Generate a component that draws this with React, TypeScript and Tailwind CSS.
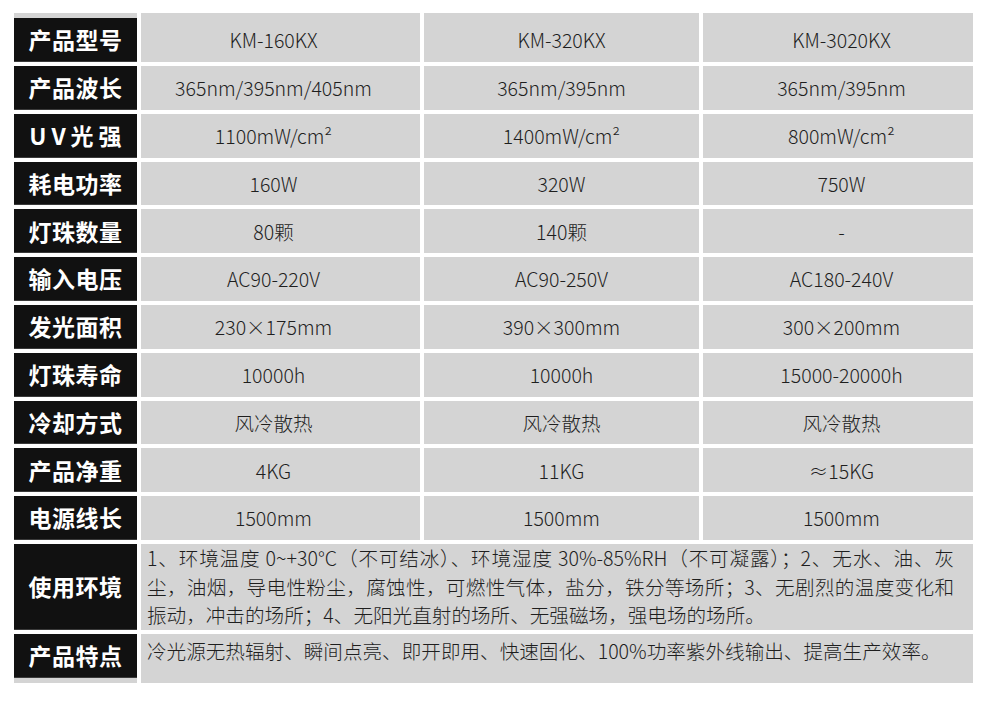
import { ReactNode } from "react";

const font = { fontFamily: '"Noto Sans CJK SC", "Noto Sans", sans-serif' };

type Row = { label: string; values: string[]; wide?: boolean };

const rows: Row[] = [
  { label: "产品波长", values: ["365nm/395nm/405nm", "365nm/395nm", "365nm/395nm"] },
  { label: "UV光强", wide: true, values: ["1100mW/cm²", "1400mW/cm²", "800mW/cm²"] },
  { label: "耗电功率", values: ["160W", "320W", "750W"] },
  { label: "灯珠数量", values: ["80颗", "140颗", "-"] },
  { label: "输入电压", values: ["AC90-220V", "AC90-250V", "AC180-240V"] },
  { label: "发光面积", values: ["230×175mm", "390×300mm", "300×200mm"] },
  { label: "灯珠寿命", values: ["10000h", "10000h", "15000-20000h"] },
  { label: "冷却方式", values: ["风冷散热", "风冷散热", "风冷散热"] },
  { label: "产品净重", values: ["4KG", "11KG", "≈15KG"] },
  { label: "电源线长", values: ["1500mm", "1500mm", "1500mm"] },
];

function Label({ children, wide }: { children: ReactNode; wide?: boolean }) {
  return (
    <div
      className={`flex h-full w-[123px] shrink-0 items-center justify-center border-b border-[#3a3a3a] bg-[#111111] text-[23px] font-bold text-white ${
        wide ? "tracking-[5px] pl-[5px]" : "tracking-[0.5px]"
      }`}
    >
      {children}
    </div>
  );
}

function Cells({ values }: { values: string[] }) {
  return (
    <>
      <div className="flex w-[279px] items-center justify-center bg-[#d4d4d4] pr-[14px]">{values[0]}</div>
      <div className="flex w-[275px] items-center justify-center bg-[#d4d4d4]">{values[1]}</div>
      <div className="flex w-[270px] items-center justify-center bg-[#d4d4d4] pl-[7px]">{values[2]}</div>
    </>
  );
}

export default function App() {
  return (
    <div className="h-[701px] w-[990px] bg-white pt-[13px] pl-[14px] text-[19.5px] font-light text-[#1e1e1e]" style={font}>
      <div className="flex flex-col gap-[4.5px]">
        {/* model row: gray strip above the black label */}
        <div className="flex h-[48.5px] gap-[4px]">
          <div className="flex w-[123px] flex-col bg-[#d4d4d4]">
            <div className="h-[5px]" />
            <div className="flex-1">
              <Label>产品型号</Label>
            </div>
          </div>
          <div className="flex gap-[4px] pt-[5px] [&>div]:-mt-[5px] [&>div]:pt-[5px]">
            <Cells values={["KM-160KX", "KM-320KX", "KM-3020KX"]} />
          </div>
        </div>

        <div className="flex flex-col gap-[4px]">
          {rows.map((r) => (
            <div key={r.label} className="flex h-[43.8px] gap-[4px]">
              <Label wide={r.wide}>{r.label}</Label>
              <Cells values={r.values} />
            </div>
          ))}

          <div className="flex h-[86px] gap-[4px]">
            <Label>使用环境</Label>
            <div className="flex w-[832px] flex-col justify-center bg-[#d4d4d4] pl-[6px] pr-[19px] text-[19.6px] leading-[28.7px]">
              <div className="text-justify [text-align-last:justify]">
                1、环境温度 0~+30°C（不可结冰）、环境湿度 30%-85%RH（不可凝露）；2、无水、油、灰
              </div>
              <div className="text-justify [text-align-last:justify]">
                尘，油烟，导电性粉尘，腐蚀性，可燃性气体，盐分，铁分等场所；3、无剧烈的温度变化和
              </div>
              <div>振动，冲击的场所；4、无阳光直射的场所、无强磁场，强电场的场所。</div>
            </div>
          </div>

          <div className="flex h-[48.7px] gap-[4px]">
            <div className="flex w-[123px] flex-col bg-[#d4d4d4]">
              <div className="h-[43.7px]">
                <Label>产品特点</Label>
              </div>
            </div>
            <div className="w-[832px] bg-[#d4d4d4] pl-[6px] pt-[3px] text-[19.6px] leading-[28px]">
              冷光源无热辐射、瞬间点亮、即开即用、快速固化、100%功率紫外线输出、提高生产效率。
            </div>
          </div>
        </div>
      </div>
    </div>
  );
}
